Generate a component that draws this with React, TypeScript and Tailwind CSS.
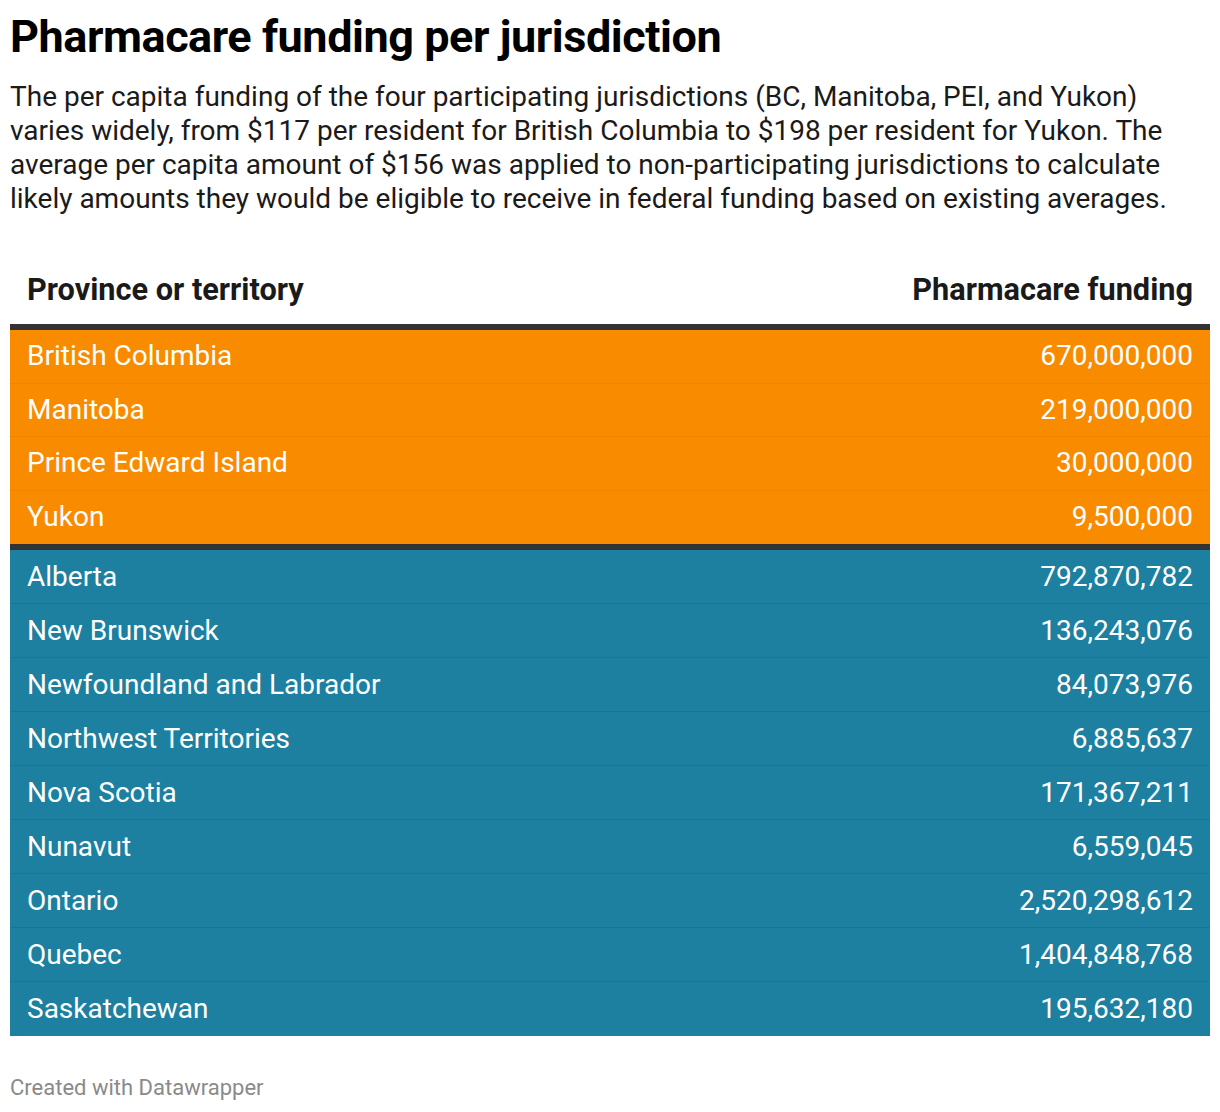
import React from "react";

const orange = [
  ["British Columbia", "670,000,000"],
  ["Manitoba", "219,000,000"],
  ["Prince Edward Island", "30,000,000"],
  ["Yukon", "9,500,000"],
];
const blue = [
  ["Alberta", "792,870,782"],
  ["New Brunswick", "136,243,076"],
  ["Newfoundland and Labrador", "84,073,976"],
  ["Northwest Territories", "6,885,637"],
  ["Nova Scotia", "171,367,211"],
  ["Nunavut", "6,559,045"],
  ["Ontario", "2,520,298,612"],
  ["Quebec", "1,404,848,768"],
  ["Saskatchewan", "195,632,180"],
];

export default function App() {
  return (
    <div className="w-[1220px] h-[1112px] bg-white px-[10px] pt-[11px]" style={{ fontFamily: "Roboto, sans-serif" }}>
      <h1 className="text-[45px] font-bold leading-[52px] text-[#000] tracking-[-0.45px]">Pharmacare funding per jurisdiction</h1>
      <p className="mt-[17px] text-[28px] leading-[34px] text-[#1a1a1a]">
        The per capita funding of the four participating jurisdictions (BC, Manitoba, PEI, and Yukon) varies widely, from $117 per resident for British Columbia to $198 per resident for Yukon. The average per capita amount of $156 was applied to non-participating jurisdictions to calculate likely amounts they would be eligible to receive in federal funding based on existing averages.
      </p>
      <div className="mt-[57px] flex items-end justify-between px-[17px] pb-[17px] text-[30.7px] font-bold leading-[34px] text-[#1a1a1a]">
        <span>Province or territory</span>
        <span>Pharmacare funding</span>
      </div>
      <div className="border-t-[6px] border-[#333333]">
        {orange.map(([n, v], i) => (
          <div key={n} className={`flex h-[53.5px] items-center justify-between bg-[#f98b00] px-[17px] text-[28px] text-white ${i < orange.length - 1 ? "border-b-[1.5px] border-[#ec8500]" : ""}`}>
            <span>{n}</span>
            <span>{v}</span>
          </div>
        ))}
      </div>
      <div className="border-t-[6px] border-[#333333]">
        {blue.map(([n, v], i) => (
          <div key={n} className={`flex h-[54px] items-center justify-between bg-[#1d80a0] px-[17px] text-[28px] text-white ${i < blue.length - 1 ? "border-b-[1.5px] border-[#1a7594]" : ""}`}>
            <span>{n}</span>
            <span>{v}</span>
          </div>
        ))}
      </div>
      <div className="mt-[39px] text-[22px] leading-[26px] text-[#8a8a8a]">Created with Datawrapper</div>
    </div>
  );
}
